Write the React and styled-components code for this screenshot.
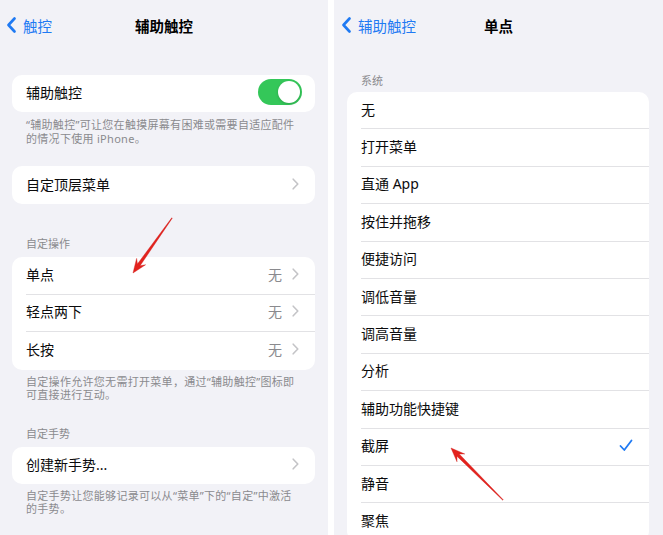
import React from 'react';
import styled, { createGlobalStyle } from 'styled-components';

const GlobalStyle = createGlobalStyle`
  html, body { margin: 0; padding: 0; background: #fff; }
  body {
    font-family: "Noto Sans", "Noto Sans CJK SC", sans-serif;
    -webkit-font-smoothing: antialiased;
  }
  * { box-sizing: border-box; }
`;

const Stage = styled.div`
  position: relative;
  width: 663px;
  height: 535px;
  overflow: hidden;
  display: flex;
  gap: 6px;
  background: #fff;
`;

const Panel = styled.section`
  width: ${(p) => p.$w}px;
  flex: none;
  height: 100%;
  background: #f2f2f7;
  display: flex;
  flex-direction: column;
  overflow: hidden;
`;

const NavBar = styled.header`
  height: 52px;
  flex: none;
  display: grid;
  grid-template-columns: 1fr auto 1fr;
  align-items: center;
  padding: 0 ${(p) => p.$px}px 2px;
`;

const Back = styled.div`
  justify-self: start;
  display: flex;
  align-items: center;
  gap: 7px;
  color: #1f7af3;
  font-size: 14.5px;
`;

const Title = styled.h1`
  margin: 0;
  font-size: 14.5px;
  font-weight: 600;
  color: #000;
`;

const Content = styled.div`
  display: flex;
  flex-direction: column;
  padding: 0 ${(p) => p.$pr}px 0 ${(p) => p.$pl}px;
`;

const SectionHeader = styled.div`
  margin-top: ${(p) => p.$mt}px;
  margin-bottom: ${(p) => p.$mb}px;
  padding-left: 14px;
  font-size: 11px;
  line-height: 14px;
  color: #8a8a8e;
`;

const Card = styled.div`
  margin-top: ${(p) => p.$mt || 0}px;
  background: #fff;
  border-radius: 10px;
  overflow: hidden;
  flex: none;
`;

const Row = styled.div`
  padding-left: 14px;
  &:last-child > div {
    border-bottom: none;
  }
`;

const RowBody = styled.div`
  height: 37.4px;
  display: flex;
  align-items: center;
  padding-right: ${(p) => p.$pr}px;
  padding-bottom: 3px;
  border-bottom: 1px solid #e2e2e5;
`;

const Label = styled.span`
  flex: 1;
  font-size: 14px;
  color: #0b0b0c;
`;

const Value = styled.span`
  font-size: 14px;
  color: #8a8a8e;
  margin-right: 10px;
`;

const Footnote = styled.p`
  margin: ${(p) => p.$mt}px 0 0;
  padding: 0 14px;
  font-size: 11px;
  line-height: 13.5px;
  color: #8a8a8e;
  letter-spacing: 0.3px;
`;

const Toggle = styled.span`
  width: 44px;
  height: 26px;
  border-radius: 13px;
  background: #34c759;
  display: flex;
  justify-content: flex-end;
  align-items: center;
  padding: 2px;
`;

const Knob = styled.span`
  width: 22px;
  height: 22px;
  border-radius: 50%;
  background: #fff;
  box-shadow: 0 1px 3px rgba(0, 0, 0, 0.18);
`;

const Overlay = styled.svg`
  position: absolute;
  left: 0;
  top: 0;
  pointer-events: none;
`;

const BackChevron = () => (
  <svg width="9" height="16" viewBox="0 0 9 16">
    <path d="M7.5 1.5 L1.5 8 L7.5 14.5" fill="none" stroke="#1f7af3" strokeWidth="2.6" strokeLinecap="round" strokeLinejoin="round" />
  </svg>
);

const Chevron = () => (
  <svg width="7" height="12" viewBox="0 0 7 12">
    <path d="M1.2 1.2 L5.8 6 L1.2 10.8" fill="none" stroke="#c4c4c7" strokeWidth="1.6" strokeLinecap="round" strokeLinejoin="round" />
  </svg>
);

const Check = () => (
  <svg width="14" height="13" viewBox="0 0 14 13">
    <path d="M1.5 7 L5.3 11 L12.5 1.5" fill="none" stroke="#1f7af3" strokeWidth="1.8" strokeLinecap="round" strokeLinejoin="round" />
  </svg>
);

function arrowPoints(tail, tip) {
  const dx = tip[0] - tail[0];
  const dy = tip[1] - tail[1];
  const len = Math.hypot(dx, dy);
  const d = [dx / len, dy / len];
  const n = [-d[1], d[0]];
  const L = 14;
  const W = 5.5;
  const base = [tip[0] - d[0] * L, tip[1] - d[1] * L];
  const neck = [tip[0] - d[0] * (L - 4), tip[1] - d[1] * (L - 4)];
  const pt = (p, s) => `${(p[0] + n[0] * s).toFixed(2)},${(p[1] + n[1] * s).toFixed(2)}`;
  return [
    pt(tail, 0.3),
    pt(neck, 1.6),
    pt(base, W),
    `${tip[0]},${tip[1]}`,
    pt(base, -W),
    pt(neck, -1.6),
    pt(tail, -0.3),
  ].join(' ');
}

const Arrow = ({ tail, tip }) => (
  <polygon points={arrowPoints(tail, tip)} fill="#e3221d" stroke="#d01a16" strokeWidth="0.4" strokeLinejoin="round" />
);

const ListRow = ({ label, value, chevron, check, toggle }) => (
  <Row>
    <RowBody $pr={toggle ? 13 : 16}>
      <Label>{label}</Label>
      {value && <Value>{value}</Value>}
      {chevron && <Chevron />}
      {check && <Check />}
      {toggle && (
        <Toggle>
          <Knob />
        </Toggle>
      )}
    </RowBody>
  </Row>
);

const actions = ['无', '打开菜单', '直通 App', '按住并拖移', '便捷访问', '调低音量', '调高音量', '分析', '辅助功能快捷键', '截屏', '静音', '聚焦'];

export default function App() {
  return (
    <>
      <GlobalStyle />
      <Stage>
        <Panel $w={328}>
          <NavBar $px={7}>
            <Back>
              <BackChevron />
              触控
            </Back>
            <Title>辅助触控</Title>
          </NavBar>
          <Content $pl={12} $pr={13}>
            <Card $mt={23}>
              <ListRow label="辅助触控" toggle />
            </Card>
            <Footnote $mt={6}>
              “辅助触控”可让您在触摸屏幕有困难或需要自适应配件
              <br />
              的情况下使用 iPhone。
            </Footnote>
            <Card $mt={21}>
              <ListRow label="自定顶层菜单" chevron />
            </Card>
            <SectionHeader $mt={33.6} $mb={6}>自定操作</SectionHeader>
            <Card>
              <ListRow label="单点" value="无" chevron />
              <ListRow label="轻点两下" value="无" chevron />
              <ListRow label="长按" value="无" chevron />
            </Card>
            <Footnote $mt={5}>
              自定操作允许您无需打开菜单，通过“辅助触控”图标即
              <br />
              可直接进行互动。
            </Footnote>
            <SectionHeader $mt={25} $mb={6}>自定手势</SectionHeader>
            <Card>
              <ListRow label="创建新手势..." chevron />
            </Card>
            <Footnote $mt={5}>
              自定手势让您能够记录可以从“菜单”下的“自定”中激活
              <br />
              的手势。
            </Footnote>
          </Content>
        </Panel>
        <Panel $w={329}>
          <NavBar $px={8}>
            <Back>
              <BackChevron />
              辅助触控
            </Back>
            <Title>单点</Title>
          </NavBar>
          <Content $pl={13} $pr={14}>
            <SectionHeader $mt={22} $mb={4}>系统</SectionHeader>
            <Card>
              {actions.map((a) => (
                <ListRow key={a} label={a} check={a === '截屏'} />
              ))}
            </Card>
          </Content>
        </Panel>
        <Overlay width="663" height="535" viewBox="0 0 663 535">
          <Arrow tail={[172, 218]} tip={[133, 273]} />
          <Arrow tail={[503, 500]} tip={[451, 448]} />
        </Overlay>
      </Stage>
    </>
  );
}
